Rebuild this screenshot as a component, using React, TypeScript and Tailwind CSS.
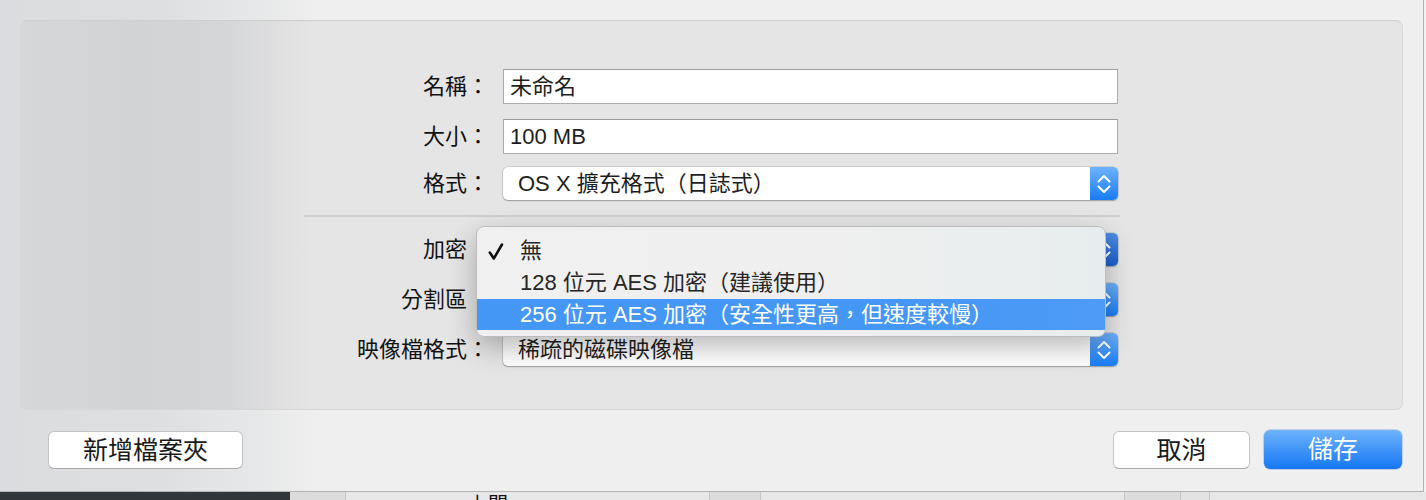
import React from 'react';

// 上下箭頭（彈出式選單右側的藍色按鈕）
const Stepper: React.FC<{ pressed?: boolean }> = ({ pressed }) => (
  <div
    className={
      pressed
        ? 'w-[28px] h-full rounded-r-[5px] flex items-center justify-center bg-[linear-gradient(180deg,#4d8fe6,#1b5ed0)]'
        : 'w-[28px] h-full rounded-r-[5px] flex items-center justify-center bg-[linear-gradient(180deg,#6db2fb,#1a7cf6)]'
    }
  >
    <svg width="14" height="20" viewBox="0 0 14 20" fill="none">
      <path d="M1.5 7.5 L7 2 L12.5 7.5" stroke="white" strokeWidth="2" strokeLinecap="round" strokeLinejoin="round" />
      <path d="M1.5 12.5 L7 18 L12.5 12.5" stroke="white" strokeWidth="2" strokeLinecap="round" strokeLinejoin="round" />
    </svg>
  </div>
);

const Row: React.FC<{ label: string; className: string; children: React.ReactNode }> = ({ label, className, children }) => (
  <div className={className}>
    <div className="w-[185px] text-right text-[22px] leading-none text-[#111] whitespace-nowrap">{label}</div>
    <div className="ml-[14px] w-[615px] relative">{children}</div>
  </div>
);

const TextField: React.FC<{ value: string }> = ({ value }) => (
  <div className="h-[35px] bg-white border border-[#ababab] border-t-[#9c9c9c] pl-[6px] flex items-center text-[22px] leading-none text-[#1e1e1e]">
    {value}
  </div>
);

const Popup: React.FC<{ value: string; pressed?: boolean }> = ({ value, pressed }) => (
  <div className="h-[33px] bg-white rounded-[5px] shadow-[0_0_0_0.5px_rgba(0,0,0,0.2),0_1px_1.5px_rgba(0,0,0,0.25)] flex items-center">
    <div className="flex-1 pl-[15px] text-[22px] leading-none text-[#1e1e1e] whitespace-nowrap">{value}</div>
    <Stepper pressed={pressed} />
  </div>
);

const MenuItem: React.FC<{ text: string; checked?: boolean; active?: boolean }> = ({ text, checked, active }) => (
  <div
    className={
      active
        ? 'h-[31px] flex items-center bg-[linear-gradient(90deg,#4597f6,#4597f6_70%,#4d9bf4)] text-white'
        : 'h-[32px] flex items-center text-[#262626]'
    }
  >
    <div className="w-[43px] flex justify-end pr-[16px]">
      {checked && (
        <svg width="16" height="17" viewBox="0 0 16 17" fill="none">
          <path d="M1.8 9.5 L5.8 15.5 L14 1.5" stroke="#111" strokeWidth="2.6" strokeLinecap="round" strokeLinejoin="round" />
        </svg>
      )}
    </div>
    <span className="text-[22px] leading-none whitespace-nowrap">{text}</span>
  </div>
);

const Button: React.FC<{ text: string; className: string }> = ({ text, className }) => (
  <div className={className}>{text}</div>
);

export default function App() {
  return (
    <div
      lang="zh-Hant"
      className="w-[1426px] h-[500px] overflow-hidden flex flex-col bg-[#efefef] font-['Liberation_Sans','Noto_Sans_CJK_TC',sans-serif]"
    >
      <div className="flex h-[492px]">
        {/* 對話框 */}
        <div className="w-[1424px] h-full flex flex-col border-r border-b border-[#b4b4b4] bg-[linear-gradient(90deg,#dbdcdf_0px,#dddfe0_160px,#e6e7e8_250px,#efefef_320px)]">
          <div className="mx-[20px] mt-[20px] h-[390px] rounded-[7px] border border-[#d7d7d7] border-t-[#cfcfcf] bg-[linear-gradient(90deg,#d6d7d9_0px,#d2d3d5_110px,#d4d5d7_200px,#e5e5e5_290px)] pl-[283px] pt-[48px]">
            <Row label="名稱：" className="flex items-center">
              <TextField value="未命名" />
            </Row>
            <Row label="大小：" className="flex items-center mt-[15px]">
              <TextField value="100 MB" />
            </Row>
            <Row label="格式：" className="flex items-center mt-[13px]">
              <Popup value="OS X 擴充格式（日誌式）" />
            </Row>

            <div className="mt-[15px] w-[816px] h-[2px] bg-[#cfcfcf]" />

            <Row label="加密：" className="flex items-center mt-[16px]">
              <Popup value="無" pressed />
              {/* 展開的選單 */}
              <div className="absolute left-[-27px] top-[-7px] w-[630px] h-[111px] z-10 rounded-[8px] overflow-hidden border border-[#bdbdbd] bg-[linear-gradient(90deg,#f0f0f0_0%,#efefef_55%,#e7edee_100%)] shadow-[0_10px_28px_rgba(0,0,0,0.28)] pt-[8px]">
                <MenuItem text="無" checked />
                <MenuItem text="128 位元 AES 加密（建議使用）" />
                <MenuItem text="256 位元 AES 加密（安全性更高，但速度較慢）" active />
              </div>
            </Row>
            <Row label="分割區：" className="flex items-center mt-[17px]">
              <Popup value="單一分割區－GUID 分割區配置表" />
            </Row>
            <Row label="映像檔格式：" className="flex items-center mt-[17px]">
              <Popup value="稀疏的磁碟映像檔" />
            </Row>
          </div>

          <div className="flex items-start pl-[48px] pr-[21px] pt-[21px]">
            <Button
              text="新增檔案夾"
              className="w-[195px] h-[38px] flex items-center justify-center bg-white rounded-[6px] border border-[#c4c4c4] border-b-[#a9a9a9] text-[25px] leading-none text-[#1a1a1a]"
            />
            <div className="flex-1" />
            <Button
              text="取消"
              className="w-[137px] h-[38px] flex items-center justify-center bg-white rounded-[6px] border border-[#c4c4c4] border-b-[#a9a9a9] text-[25px] leading-none text-[#1a1a1a]"
            />
            <Button
              text="儲存"
              className="ml-[14px] w-[138px] h-[39px] -mt-[1px] flex items-center justify-center rounded-[6px] bg-[linear-gradient(180deg,#6eb4fb,#1577f6)] shadow-[0_0_0_0.5px_rgba(0,60,180,0.35)] text-[25px] leading-none text-white"
            />
          </div>
        </div>
        <div className="flex-1 bg-[#f2f2f2]" />
      </div>

      {/* 後方視窗的露出部分 */}
      <div className="flex h-[8px] overflow-hidden">
        <div className="w-[290px] bg-[#30363a]" />
        <div className="w-[56px] bg-[#dcdcdc] border-r border-[#c6c6c6]" />
        <div className="w-[364px] bg-[#e7e7e7] border-r border-[#c6c6c6] pl-[122px] pt-[3px]">
          <span className="text-[20px] leading-none text-[#111]">上開</span>
        </div>
        <div className="w-[51px] bg-[#dcdcdc] border-r border-[#c6c6c6]" />
        <div className="w-[364px] bg-[#e7e7e7] border-r border-[#c6c6c6]" />
        <div className="w-[56px] bg-[#dcdcdc] border-r border-[#c6c6c6]" />
        <div className="w-[29px] bg-[#e3e3e3] border-r border-[#c6c6c6]" />
        <div className="flex-1 bg-[#e7e7e7]" />
      </div>
    </div>
  );
}
